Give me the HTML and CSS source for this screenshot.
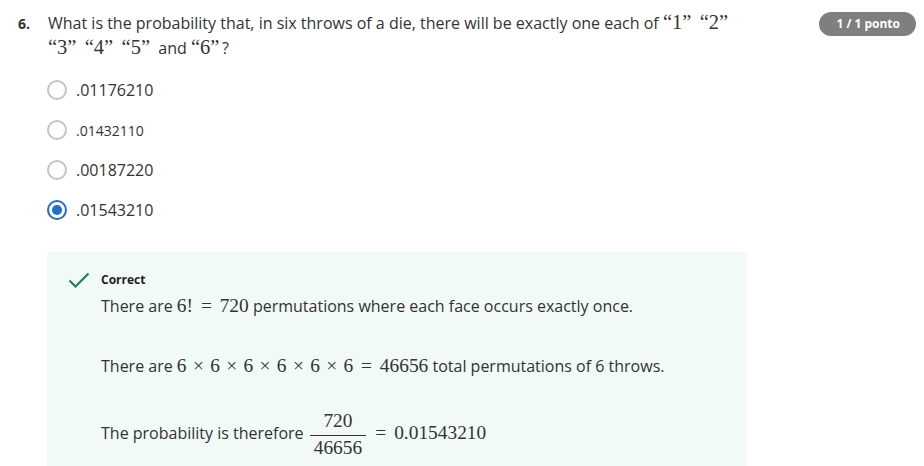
FILE: index.html
```html
<!DOCTYPE html>
<html>
<head>
<meta charset="utf-8">
<link rel="stylesheet" href="styles.css">
</head>
<body>
<div class="question">
  <div class="qhead">
    <div class="qnum">6.</div>
    <div class="qtext">What is the probability that, in six throws of a die, there will be exactly one each of <span class="m qm">“1”</span>&nbsp; <span class="m qm">“2”</span> <span class="m qm">“3”</span>&nbsp; <span class="m qm">“4”</span>&nbsp; <span class="m qm">“5”</span>&nbsp; and <span class="m qm">“6”</span>&thinsp;?</div>
    <div class="badge">1 / 1 ponto</div>
  </div>
  <div class="options">
    <label class="opt"><span class="radio"></span><span class="otext">.01176210</span></label>
    <label class="opt"><span class="radio"></span><span class="otext small">.01432110</span></label>
    <label class="opt"><span class="radio"></span><span class="otext">.00187220</span></label>
    <label class="opt"><span class="radio checked"></span><span class="otext">.01543210</span></label>
  </div>
  <div class="feedback">
    <svg class="check" width="22" height="16" viewBox="0 0 22 16"><path d="M1.5 8.5 L7.5 14.5 L20.5 1.5" fill="none" stroke="#1f8354" stroke-width="2.2"/></svg>
    <div class="fbody">
      <div class="ftitle">Correct</div>
      <p class="p1">There are <span class="m">6! <span class="rel">=</span> 720</span> permutations where each face occurs exactly once.</p>
      <p class="p2">There are <span class="m">6 <span class="bin">×</span> 6 <span class="bin">×</span> 6 <span class="bin">×</span> 6 <span class="bin">×</span> 6 <span class="bin">×</span> 6 <span class="rel">=</span> 46656</span> total permutations of 6 throws.</p>
      <p class="p3">The probability is therefore <span class="frac m"><span class="num">720</span><span class="den">46656</span></span> <span class="m"><span class="rel">=</span> 0.01543210</span></p>
    </div>
  </div>
</div>
</body>
</html>
```
FILE: styles.css
```css
* { box-sizing: border-box; }
body {
  margin: 0;
  background: #fff;
  font-family: "Open Sans", "Noto Sans", sans-serif;
  color: #1f1f1f;
}
.question {
  padding: 11px 8px 0 18px;
}
.qhead {
  display: flex;
  align-items: flex-start;
}
.qnum {
  width: 30px;
  font-size: 14px;
  font-weight: 700;
  line-height: 25px;
  color: #333;
}
.qtext {
  width: 710px;
  font-size: 16px;
  line-height: 25px;
  color: #333;
}
.m {
  font-family: "Liberation Serif", "DejaVu Serif", serif;
  font-size: 19.4px;
  line-height: 1;
}
.m.qm {
  font-size: 20.5px;
}
.badge {
  margin-left: auto;
  margin-top: 1px;
  background: #7f7f7f;
  color: #fff;
  font-size: 12px;
  font-weight: 700;
  line-height: 24px;
  height: 24px;
  padding: 0 16px 0 17px;
  border-radius: 12px;
}
.options {
  display: flex;
  flex-direction: column;
  gap: 18px;
  margin-top: 18px;
  padding-left: 29px;
}
.opt {
  display: flex;
  align-items: center;
  height: 22px;
}
.radio {
  width: 20px;
  height: 20px;
  border: 2px solid #c4c4c4;
  border-radius: 50%;
  margin-right: 9px;
  position: relative;
}
.radio.checked {
  border-color: #1f6dd1;
}
.radio.checked::after {
  content: "";
  position: absolute;
  left: 3px;
  top: 3px;
  width: 10px;
  height: 10px;
  border-radius: 50%;
  background: #1f6dd1;
}
.otext {
  font-size: 16px;
  color: #333;
}
.otext.small {
  font-size: 14px;
}
.feedback {
  margin-top: 31px;
  margin-left: 29px;
  width: 700px;
  background: #f1faf7;
  display: flex;
  padding: 20px 20px 0 21px;
  min-height: 220px;
}
.check {
  flex: none;
}
.fbody {
  margin-left: 11px;
  color: #333;
}
.ftitle {
  font-size: 12px;
  font-weight: 700;
  line-height: 16px;
  color: #1f1f1f;
}
.fbody p {
  margin: 0;
  font-size: 16px;
  line-height: 24px;
}
.fbody .p1 {
  margin-top: 6px;
  margin-bottom: 36px;
}
.fbody .p2 {
  margin-bottom: 32px;
}
.bin {
  margin: 0 1.5px;
}
.rel {
  margin: 0 3px;
}
.frac {
  display: inline-flex;
  flex-direction: column;
  align-items: center;
  vertical-align: middle;
  margin: 0 2px 0 2px;
  line-height: 22px;
}
.num {
  align-self: stretch;
  text-align: center;
  padding: 0 0 3px;
  border-bottom: 1px solid #333;
}
.den {
  padding: 1px 4px 0;
}
```
